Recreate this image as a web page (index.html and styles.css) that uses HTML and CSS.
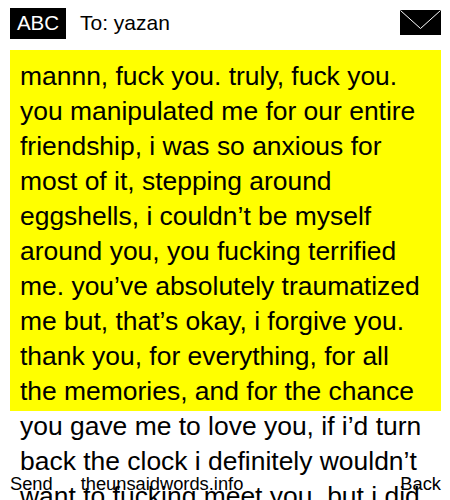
FILE: index.html
```
<!DOCTYPE html>
<html lang="en">
<head>
<meta charset="utf-8">
<title>Message</title>
<link rel="stylesheet" href="styles.css">
</head>
<body>
<div class="phone">
  <header class="head">
    <span class="abc">ABC</span>
    <span class="to">To: yazan</span>
    <svg class="env" width="41" height="25" viewBox="0 0 41 25" aria-hidden="true">
      <rect width="41" height="25" fill="#000"/>
      <path d="M0.5 0.5L20.5 18.5L40.5 0.5" fill="none" stroke="#fff" stroke-width="1"/>
    </svg>
  </header>
  <main class="msg">mannn, fuck you. truly, fuck you. you manipulated me for our entire friendship, i was so anxious for most of it, stepping around eggshells, i couldn’t be myself around you, you fucking terrified me. you’ve absolutely traumatized me but, that’s okay, i forgive you. thank you, for everything, for all the memories, and for the chance you gave me to love you, if i’d turn back the clock i definitely wouldn’t want to fucking meet you, but i did</main>
  <footer class="foot">
    <span>Send</span>
    <span class="site">theunsaidwords.info</span>
    <span class="back">Back</span>
  </footer>
</div>
</body>
</html>
```
FILE: styles.css
```
html, body { margin: 0; padding: 0; height: 500px; overflow: hidden; background: #fff; }
.phone { position: relative; width: 450px; height: 500px; overflow: hidden; font-family: "Liberation Sans", Arial, sans-serif; color: #000; }
.head { display: flex; align-items: center; height: 31px; padding: 8px 9px 11px 10px; }
.abc { background: #000; color: #fff; font-size: 20.5px; line-height: 29px; padding-bottom: 2px; width: 56px; text-align: center; }
.to { font-size: 21px; margin: 0 0 2px 14px; flex: 1; }
.env { display: block; margin-bottom: 3px; }
.msg { box-sizing: border-box; margin: 0 9px 0 10px; height: 361px; background: #ff0; padding: 8.5px 10px 0; font-size: 26.45px; line-height: 35px; }
.foot { position: absolute; left: 10px; right: 9px; bottom: 5px; display: flex; font-size: 18.3px; line-height: 22px; }
.site { margin-left: 28px; flex: 1; }
```
